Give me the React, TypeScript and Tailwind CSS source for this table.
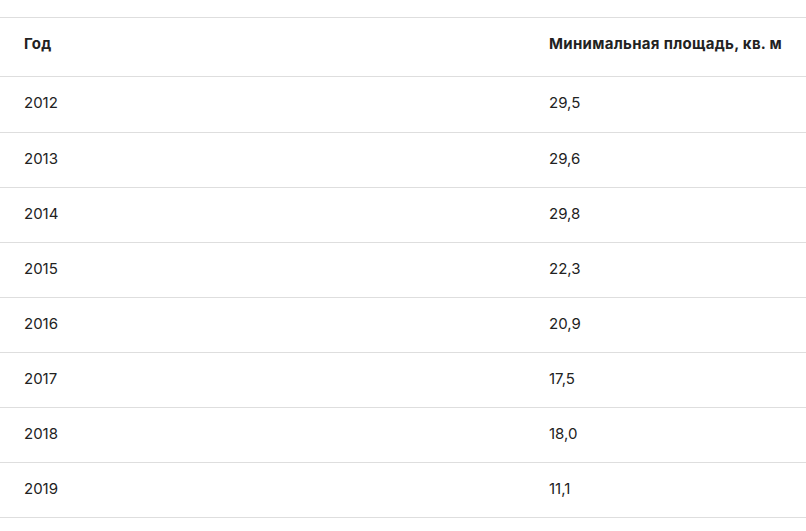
const ROWS: [string, string][] = [
  ['2012', '29,5'],
  ['2013', '29,6'],
  ['2014', '29,8'],
  ['2015', '22,3'],
  ['2016', '20,9'],
  ['2017', '17,5'],
  ['2018', '18,0'],
  ['2019', '11,1'],
]

export default function App() {
  return (
    <div className="min-h-[531px] bg-white pt-[17px] font-['Inter',sans-serif] text-[15px] text-[#222]">
      <div className="border-t border-[#dedede]">
        <div className="grid h-[59px] grid-cols-[549px_1fr] items-center border-b border-[#dedede] pb-[5px] font-bold tracking-[0.3px]">
          <div className="pl-6">Год</div>
          <div>Минимальная площадь, кв. м</div>
        </div>
        {ROWS.map(([year, area], i) => (
          <div
            key={year}
            className={
              i === 0
                ? 'grid h-[56px] grid-cols-[549px_1fr] items-center border-b border-[#dedede] pb-[2px]'
                : 'grid h-[55px] grid-cols-[549px_1fr] items-center border-b border-[#dedede] pb-[2px]'
            }
          >
            <div className="pl-6">{year}</div>
            <div>{area}</div>
          </div>
        ))}
      </div>
    </div>
  )
}
